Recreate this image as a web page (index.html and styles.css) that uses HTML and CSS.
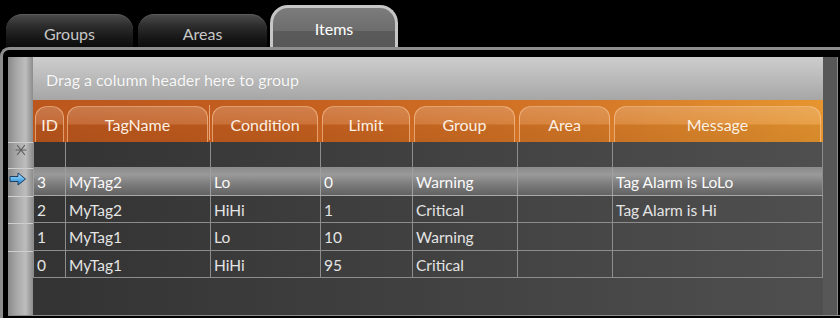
FILE: index.html
```html
<!DOCTYPE html>
<html>
<head>
<meta charset="utf-8">
<link rel="stylesheet" href="styles.css">
</head>
<body>
<div class="tabs">
  <div class="tab">Groups</div>
  <div class="tab tab-areas">Areas</div>
  <div class="tab active">Items</div>
</div>
<div class="frame">
  <div class="content">
    <div class="rowheaders">
      <div class="rh-top"></div>
      <div class="rh rh-new">
        <svg width="12" height="12" viewBox="0 0 12 12"><g stroke="#5c5c5c" stroke-width="1.2" stroke-linecap="round"><line x1="1" y1="6" x2="11" y2="6"/><line x1="2.5" y1="1.5" x2="9.5" y2="10.5"/><line x1="9.5" y1="1.5" x2="2.5" y2="10.5"/></g></svg>
      </div>
      <div class="rh rh-cur">
        <svg width="18" height="14" viewBox="0 0 18 14">
          <defs><linearGradient id="ag" x1="0" y1="0" x2="0" y2="1"><stop offset="0" stop-color="#bfe8ff"/><stop offset="0.5" stop-color="#5fb4ec"/><stop offset="1" stop-color="#1f78c0"/></linearGradient></defs>
          <polygon points="1,4.5 9,4.5 9,1 16.5,7 9,13 9,9.5 1,9.5" fill="url(#ag)" stroke="#1d3f63" stroke-width="1" stroke-linejoin="round"/>
        </svg>
      </div>
      <div class="rh rh-27"></div>
      <div class="rh rh-28"></div>
      <div class="rh rh-27"></div>
    </div>
    <div class="main">
      <div class="grouppanel">Drag a column header here to group</div>
      <div class="header">
        <div class="hcol"><div class="hcell">ID</div></div>
        <div class="hcol hcol-split"><div class="hcell">TagName</div></div>
        <div class="hcol"><div class="hcell">Condition</div></div>
        <div class="hcol"><div class="hcell">Limit</div></div>
        <div class="hcol"><div class="hcell">Group</div></div>
        <div class="hcol"><div class="hcell">Area</div></div>
        <div class="hcol"><div class="hcell">Message</div></div>
      </div>
      <div class="row row-new">
        <div class="cell"></div><div class="cell"></div><div class="cell"></div><div class="cell"></div><div class="cell"></div><div class="cell"></div><div class="cell"></div>
      </div>
      <div class="row row-sel h28">
        <div class="cell">3</div><div class="cell">MyTag2</div><div class="cell">Lo</div><div class="cell">0</div><div class="cell">Warning</div><div class="cell"></div><div class="cell">Tag Alarm is LoLo</div>
      </div>
      <div class="row h27">
        <div class="cell">2</div><div class="cell">MyTag2</div><div class="cell">HiHi</div><div class="cell">1</div><div class="cell">Critical</div><div class="cell"></div><div class="cell">Tag Alarm is Hi</div>
      </div>
      <div class="row h28">
        <div class="cell">1</div><div class="cell">MyTag1</div><div class="cell">Lo</div><div class="cell">10</div><div class="cell">Warning</div><div class="cell"></div><div class="cell"></div>
      </div>
      <div class="row h27">
        <div class="cell">0</div><div class="cell">MyTag1</div><div class="cell">HiHi</div><div class="cell">95</div><div class="cell">Critical</div><div class="cell"></div><div class="cell"></div>
      </div>
    </div>
    <div class="strip"></div>
  </div>
</div>
</body>
</html>
```

FILE: styles.css
```css
* { box-sizing: border-box; }
html, body { margin: 0; padding: 0; }
body {
  width: 840px;
  height: 318px;
  overflow: hidden;
  background: #000;
  font-family: "Lato", "Open Sans", sans-serif;
  font-size: 16px;
}

.tabs {
  display: flex;
  align-items: flex-end;
  height: 47px;
  padding-left: 6px;
}
.tab {
  width: 127px;
  height: 33px;
  margin-right: 5px;
  border-radius: 16px 16px 0 0;
  background: linear-gradient(to bottom, #4a4a4a 0, #2c2c2c 35%, #161616 75%, #0c0c0c 100%);
  border-top: 1px solid #5c5c5c;
  color: #c8c8c8;
  text-align: center;
  padding-top: 9px;
  line-height: 20px;
}
.tab-areas { width: 129px; margin-right: 3px; }
.tab.active {
  width: 128px;
  height: 42px;
  border: 3px solid #c6c6c6;
  border-bottom: none;
  border-radius: 18px 18px 0 0;
  background: linear-gradient(to bottom, #7c7c7c 0, #6c6c6c 60%, #5b5b5b 60%, #585858 100%);
  color: #fff;
  padding-top: 11px;
}

.frame {
  height: 271px;
  border-top: 3px solid #8e8e8e;
  border-left: 3px solid #8e8e8e;
  border-top-left-radius: 9px;
  padding: 7px 0 0 5px;
}
.content {
  display: flex;
  height: 259px;
  border-bottom: 1px solid #8a8a8a;
}

.rowheaders {
  width: 25px;
  display: flex;
  flex-direction: column;
  background: linear-gradient(to right, #8a8a8a 0, #a8a8a8 35%, #bdbdbd 70%, #8c8c8c 100%);
}
.rh-top { height: 85px; }
.rh {
  border-top: 1px solid #cfcfcf;
  display: flex;
  justify-content: center;
  align-items: flex-start;
}
.rh-new { height: 26px; padding-top: 1px; padding-left: 1px; }
.rh-cur { height: 28px; padding-top: 3px; justify-content: flex-start; padding-left: 1px; }
.rh-27 { height: 27px; }
.rh-28 { height: 28px; }

.main {
  width: 790px;
  display: flex;
  flex-direction: column;
  background: linear-gradient(to right, #333 0, #3e3e3e 40%, #4f4f4f 100%);
}
.grouppanel {
  height: 43px;
  background: linear-gradient(to bottom, #cdcdcd 0, #bcbcbc 45%, #a6a6a6 100%);
  color: #f8f8f8;
  font-size: 16px;
  padding-left: 13px;
  line-height: 45px;
  text-shadow: 0 0 1px rgba(0,0,0,.15);
}

.header {
  height: 42px;
  display: grid;
  grid-template-columns: 32px 145px 110px 92px 105px 95px 211px;
  background: linear-gradient(to right, #bb561d 0, #c6601f 35%, #d57827 70%, #e6952f 100%);
}
.hcol {
  padding: 6px 2px 0 2px;
}
.hcol:first-child { padding-left: 2px; padding-right: 1px; }
.hcol-split {
  background: linear-gradient(#e9a57a, #e9a57a) right 5px / 1px 35px no-repeat;
}
.hcell {
  height: 36px;
  border: 1.5px solid rgba(255, 205, 160, 0.6);
  border-bottom: none;
  border-radius: 12px 12px 0 0;
  background: linear-gradient(to bottom, rgba(255,255,255,.2) 0, rgba(255,255,255,.12) 48%, rgba(0,0,0,.05) 52%, rgba(0,0,0,.07) 100%);
  color: #fdf0e4;
  text-align: center;
  line-height: 35px;
  white-space: nowrap;
}

.row {
  display: grid;
  grid-template-columns: 32px 145px 110px 92px 105px 95px 211px;
  border-bottom: 1px solid #8d8d8d;
  font-size: 15.5px;
}
.row-new { height: 26px; }
.h28 { height: 28px; }
.h27 { height: 27px; }
.row-sel {
  background: linear-gradient(to bottom, #8c8c8c 0, #9a9a9a 25%, #7c7c7c 60%, #626262 100%);
  border-bottom-color: #a8a8a8;
}
.cell {
  border-left: 1px solid #8d8d8d;
  color: #e4e4e4;
  padding-left: 3px;
  line-height: 28px;
  white-space: nowrap;
  overflow: hidden;
}
.cell:last-child { border-right: 1px solid #8d8d8d; }
.row-sel .cell { color: #fafafa; border-left-color: #a0a0a0; }

.strip {
  width: 15px;
  background: #575757;
  border-right: 1px solid #8a8a8a;
}
```
